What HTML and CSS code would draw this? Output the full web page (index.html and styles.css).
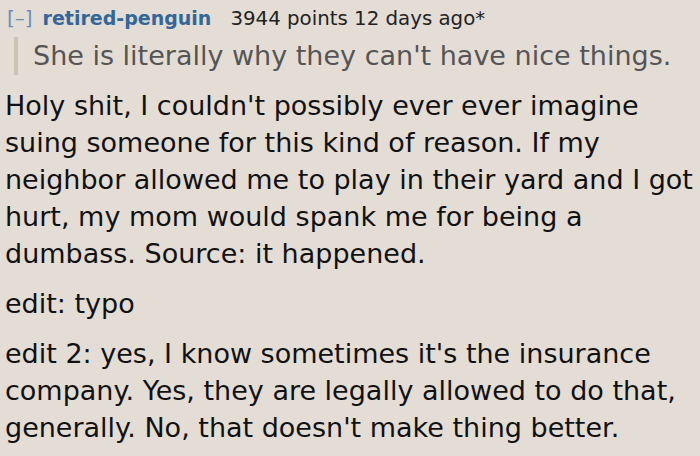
FILE: index.html
```html
<!DOCTYPE html>
<html>
<head>
<meta charset="utf-8">
<link rel="stylesheet" href="styles.css">
</head>
<body>
<div class="comment">
  <div class="tagline">
    <span class="toggle">[–]</span>
    <span class="author">retired-penguin</span>
    <span class="score">3944 points 12 days ago*</span>
  </div>
  <blockquote class="quote">She is literally why they can't have nice things.</blockquote>
  <div class="md">
    <p>Holy shit, I couldn't possibly ever ever imagine suing someone for this kind of reason. If my neighbor allowed me to play in their yard and I got hurt, my mom would spank me for being a dumbass. Source: it happened.</p>
    <p>edit: typo</p>
    <p>edit 2: yes, I know sometimes it's the insurance company. Yes, they are legally allowed to do that, generally. No, that doesn't make thing better.</p>
  </div>
</div>
</body>
</html>
```

FILE: styles.css
```css
html, body {
  margin: 0;
  padding: 0;
  background: #e4ddd5;
}
body {
  font-family: "DejaVu Sans", Verdana, sans-serif;
  width: 700px;
  height: 456px;
  overflow: hidden;
}
.comment {
  padding: 0 0 0 5px;
}
.tagline {
  display: flex;
  align-items: baseline;
  padding-top: 4px;
  height: 32px;
  line-height: 28px;
  font-size: 19px;
  box-sizing: border-box;
}
.toggle {
  color: #6a8fbf;
  font-size: 20px;
  margin-left: 2px;
  margin-right: 10px;
}
.author {
  color: #336699;
  font-weight: bold;
  margin-right: 19px;
}
.score {
  color: #222;
  font-size: 19.8px;
}
.quote {
  margin: 5px 0 0 9px;
  padding: 0 0 0 15px;
  border-left: 4px solid #c8c3b3;
  color: #555;
  font-size: 27px;
  line-height: 38px;
}
.md p {
  margin: 12px 0 0 0;
  font-size: 27px;
  line-height: 37px;
  color: #111;
}
.md p + p {
  margin-top: 13px;
}
```
